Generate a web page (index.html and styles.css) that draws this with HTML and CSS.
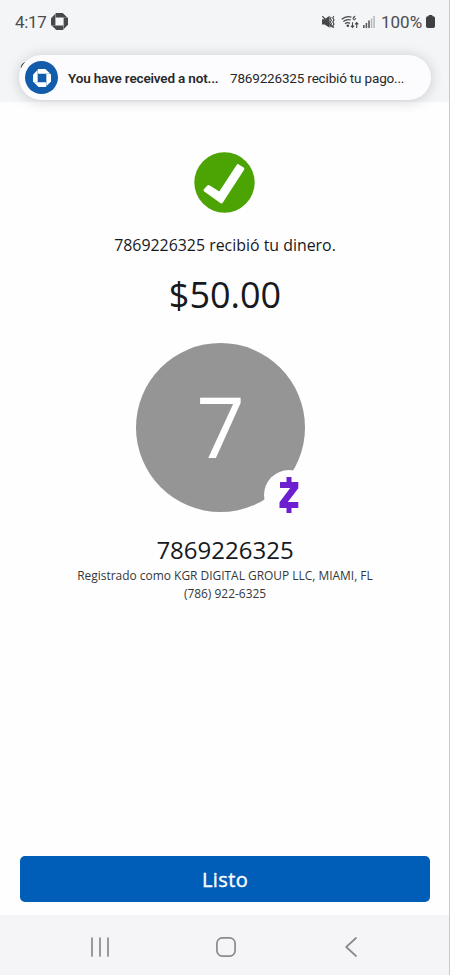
FILE: index.html
```html
<!DOCTYPE html>
<html lang="es">
<head>
  <meta charset="UTF-8" />
  <meta name="viewport" content="width=device-width, initial-scale=1.0"/>
  <title>Pago enviado</title>
  <link rel="stylesheet" href="styles.css">
</head>
<body>
  <svg class="sprite" width="0" height="0">
    <symbol id="bank" viewBox="0 0 24 24">
      <path id="side" d="M7.300 0h9.200l6.600 6.200H6.500V.8q0-.8.8-.8z"/>
      <use href="#side" transform="rotate(90 12 12)"/>
      <use href="#side" transform="rotate(180 12 12)"/>
      <use href="#side" transform="rotate(270 12 12)"/>
    </symbol>
  </svg>

  <header class="top">
    <div class="status-bar">
      <span class="time">4:17</span>
      <svg class="status-bank" width="17" height="17"><use href="#bank"/></svg>
      <div class="status-right">
        <svg width="13" height="14" viewBox="0 0 13 14">
          <path d="M0 4.2h2.600L7.600.8v12L2.600 9.600H0z" fill="#47484a"/>
          <path d="M9.200 2l-1 1.600 1.200 1.700-1.200 1.700 1.200 1.700-1.200 1.700 1 1.600M11.800 1l-1 1.900 1.200 2-1.200 2 1.200 2-1.200 2 1 1.800" fill="none" stroke="#47484a" stroke-width="1.1"/>
          <path d="M.3 1.200l10.500 11" stroke="#47484a" stroke-width="1.3"/>
        </svg>
        <svg class="wifi" width="18" height="14" viewBox="0 0 18 14">
          <g fill="none" stroke="#47484a" stroke-width="1.3">
            <path d="M.7 4.200Q5.500.2 10.400 2.200M2.400 6.500Q6 3.600 9.800 5M4.100 8.800q2.400-2 4.800-.4"/>
            <path d="M14.300 1.200q-2-.2-2.300 2.300a1.300 1.300 0 1 0 2.600 0q-.5-1.200-2.300-.3" stroke-width="1"/>
            <path d="M11.500 7.200v5.200M9.900 10.700l1.600 1.800 1.600-1.800M15.700 12.900V7.700M14.100 9.400l1.600-1.800 1.600 1.800" stroke-width="1.1"/>
          </g>
          <circle cx="6.800" cy="10.800" r="1.300" fill="#47484a"/>
        </svg>
        <svg class="signal" width="12" height="12" viewBox="0 0 12 12">
          <path d="M0 9h1.600v3H0zM2.600 7h1.600v5H2.600zM5.200 4.600h1.600V12H5.200z" fill="#58595b"/>
          <path d="M7.800 2.400h1.500V12H7.800zM10.300 0h1.500v12h-1.500z" fill="#b6b7b9"/>
        </svg>
        <span class="percent">100%</span>
        <svg width="9" height="13" viewBox="0 0 9 13">
          <path d="M2.500 1.200V.8q0-.8.8-.8h2.400q.8 0 .8.8v.4h.7Q9 1.200 9 3v8.200Q9 13 7.200 13H1.800Q0 13 0 11.200V3q0-1.800 1.800-1.800z" fill="#3f4042"/>
        </svg>
      </div>
    </div>

    <div class="behind"></div>
    <div class="notification">
      <div class="app-icon">
        <svg width="18" height="18"><use href="#bank"/></svg>
      </div>
      <span class="notif-title">You have received a not...</span>
      <span class="notif-text">7869226325 recibió tu pago...</span>
    </div>
  </header>

  <main class="content">
    <svg class="check" width="61" height="61" viewBox="0 0 61 61">
      <circle cx="30.500" cy="30.500" r="30.200" fill="#4ba304"/>
      <path d="M9.900 39.300q-.900-1.200 0-2.100l3.500-3.800q.900-.8 2-.1l9.900 6.200 17.300-26.600q.9-1.300 2.200-.5l4.800 3.200q1.300.9.500 2.200L28.700 50.700q-1 1.500-2.400.4z" fill="#fff"/>
    </svg>
    <p class="message">7869226325 recibió tu dinero.</p>
    <h1 class="amount">$50.00</h1>

    <div class="avatar">
      <span>7</span>
      <div class="zelle">
        <svg width="20" height="36" viewBox="0 0 20 36">
          <path d="M7.500 0h5v5H19.300v6.200L8.800 25h10.500v6h-6.800v5h-5v-5H.5v-5.700L11.200 11H1V5h6.500z" fill="#6b1fd0"/>
        </svg>
      </div>
    </div>

    <h2 class="name">7869226325</h2>
    <p class="detail">Registrado como KGR DIGITAL GROUP LLC, MIAMI, FL</p>
    <p class="detail">(786) 922-6325</p>

    <button class="done">Listo</button>
  </main>

  <nav class="nav-bar">
    <svg width="20" height="20" viewBox="0 0 20 20">
      <path d="M2 1v18M10 1v18M18 1v18"/>
    </svg>
    <svg width="20" height="20" viewBox="0 0 20 20">
      <rect x=".9" y=".9" width="18.200" height="18.200" rx="5.500"/>
    </svg>
    <svg width="20" height="20" viewBox="0 0 20 20">
      <path d="M15 1L5.200 10l9.800 9"/>
    </svg>
  </nav>
</body>
</html>
```
FILE: styles.css
```css
* {
  box-sizing: border-box;
  margin: 0;
  padding: 0;
}

body {
  font-family: 'Open Sans', sans-serif;
  background: #fefefe;
  color: #16191d;
  display: flex;
  flex-direction: column;
  height: 975px;
  overflow: hidden;
  border-right: 1px solid #c9c9cb;
}

.sprite {
  position: absolute;
}

.top {
  position: relative;
  height: 102px;
  background: #f4f5f7;
  flex-shrink: 0;
}

.status-bar {
  display: flex;
  align-items: center;
  height: 43px;
  padding: 0 14px 0 15px;
  font-family: Roboto, sans-serif;
  font-size: 17px;
  color: #4b4c4e;
}

.time {
  width: 36px;
  letter-spacing: -0.3px;
}

.status-bank {
  fill: #47484a;
}

.status-right {
  display: flex;
  align-items: center;
  margin-left: auto;
}

.wifi {
  margin-left: 6px;
}

.signal {
  margin: 0 6px 0 4px;
}

.percent {
  width: 44px;
  margin-right: 1px;
}

/* edge of the back arrow hidden by the notification */
.behind {
  position: absolute;
  left: 21px;
  top: 62px;
  width: 10px;
  height: 10px;
  border-top: 2px solid #333;
  border-radius: 50%;
  transform: rotate(-35deg);
}

.notification {
  position: absolute;
  left: 19px;
  top: 55px;
  width: 412px;
  height: 45px;
  display: flex;
  align-items: center;
  padding-left: 6px;
  background: #fcfcfe;
  border-radius: 23px;
  box-shadow: 0 1px 14px rgba(0,0,0,0.18);
  font-family: Roboto, sans-serif;
  font-size: 13.5px;
  letter-spacing: -0.17px;
  color: #27282a;
  white-space: nowrap;
}

.app-icon {
  width: 33px;
  height: 33px;
  display: flex;
  align-items: center;
  justify-content: center;
  background: #135cab;
  border-radius: 50%;
  fill: #fff;
}

.notif-title {
  width: 172px;
  padding-left: 10px;
  font-weight: 600;
}

.content {
  flex: 1;
  display: flex;
  flex-direction: column;
  align-items: center;
  padding: 50px 19px 13px 20px;
}

.check {
  margin-right: 1px;
}

.message {
  margin-top: 20px;
  font-size: 15.9px;
  line-height: 24px;
}

.amount {
  margin-top: 13px;
  font-size: 36px;
  font-weight: 400;
  line-height: 50px;
}

.avatar {
  position: relative;
  width: 169px;
  height: 169px;
  margin: 23px 9px 0 0;
  background: #959595;
  border-radius: 50%;
  color: #fff;
  font-size: 85px;
  line-height: 165px;
  text-align: center;
}

.zelle {
  position: absolute;
  left: 128px;
  top: 127px;
  width: 50px;
  height: 50px;
  display: flex;
  align-items: center;
  justify-content: center;
  background: #fefefe;
  border-radius: 50%;
}

.name {
  margin-top: 21px;
  font-size: 24px;
  font-weight: 400;
  line-height: 33px;
}

.detail {
  font-size: 11.95px;
  line-height: 17.5px;
  color: #35373a;
}

.name + .detail {
  margin-top: 1px;
}

.done {
  width: 410px;
  height: 46px;
  margin-top: auto;
  border: none;
  border-radius: 5px;
  background: #005eb8;
  color: #fff;
  font-family: inherit;
  font-size: 20px;
  letter-spacing: 0.4px;
  -webkit-text-stroke: 0.4px #fff;
}

.nav-bar {
  height: 60px;
  padding: 3px 88px 0 90px;
  display: flex;
  align-items: center;
  justify-content: space-between;
  background: #f5f5f8;
}

.nav-bar svg {
  fill: none;
  stroke: #8a8a8d;
  stroke-width: 1.7;
  stroke-linecap: round;
  stroke-linejoin: round;
}
```
